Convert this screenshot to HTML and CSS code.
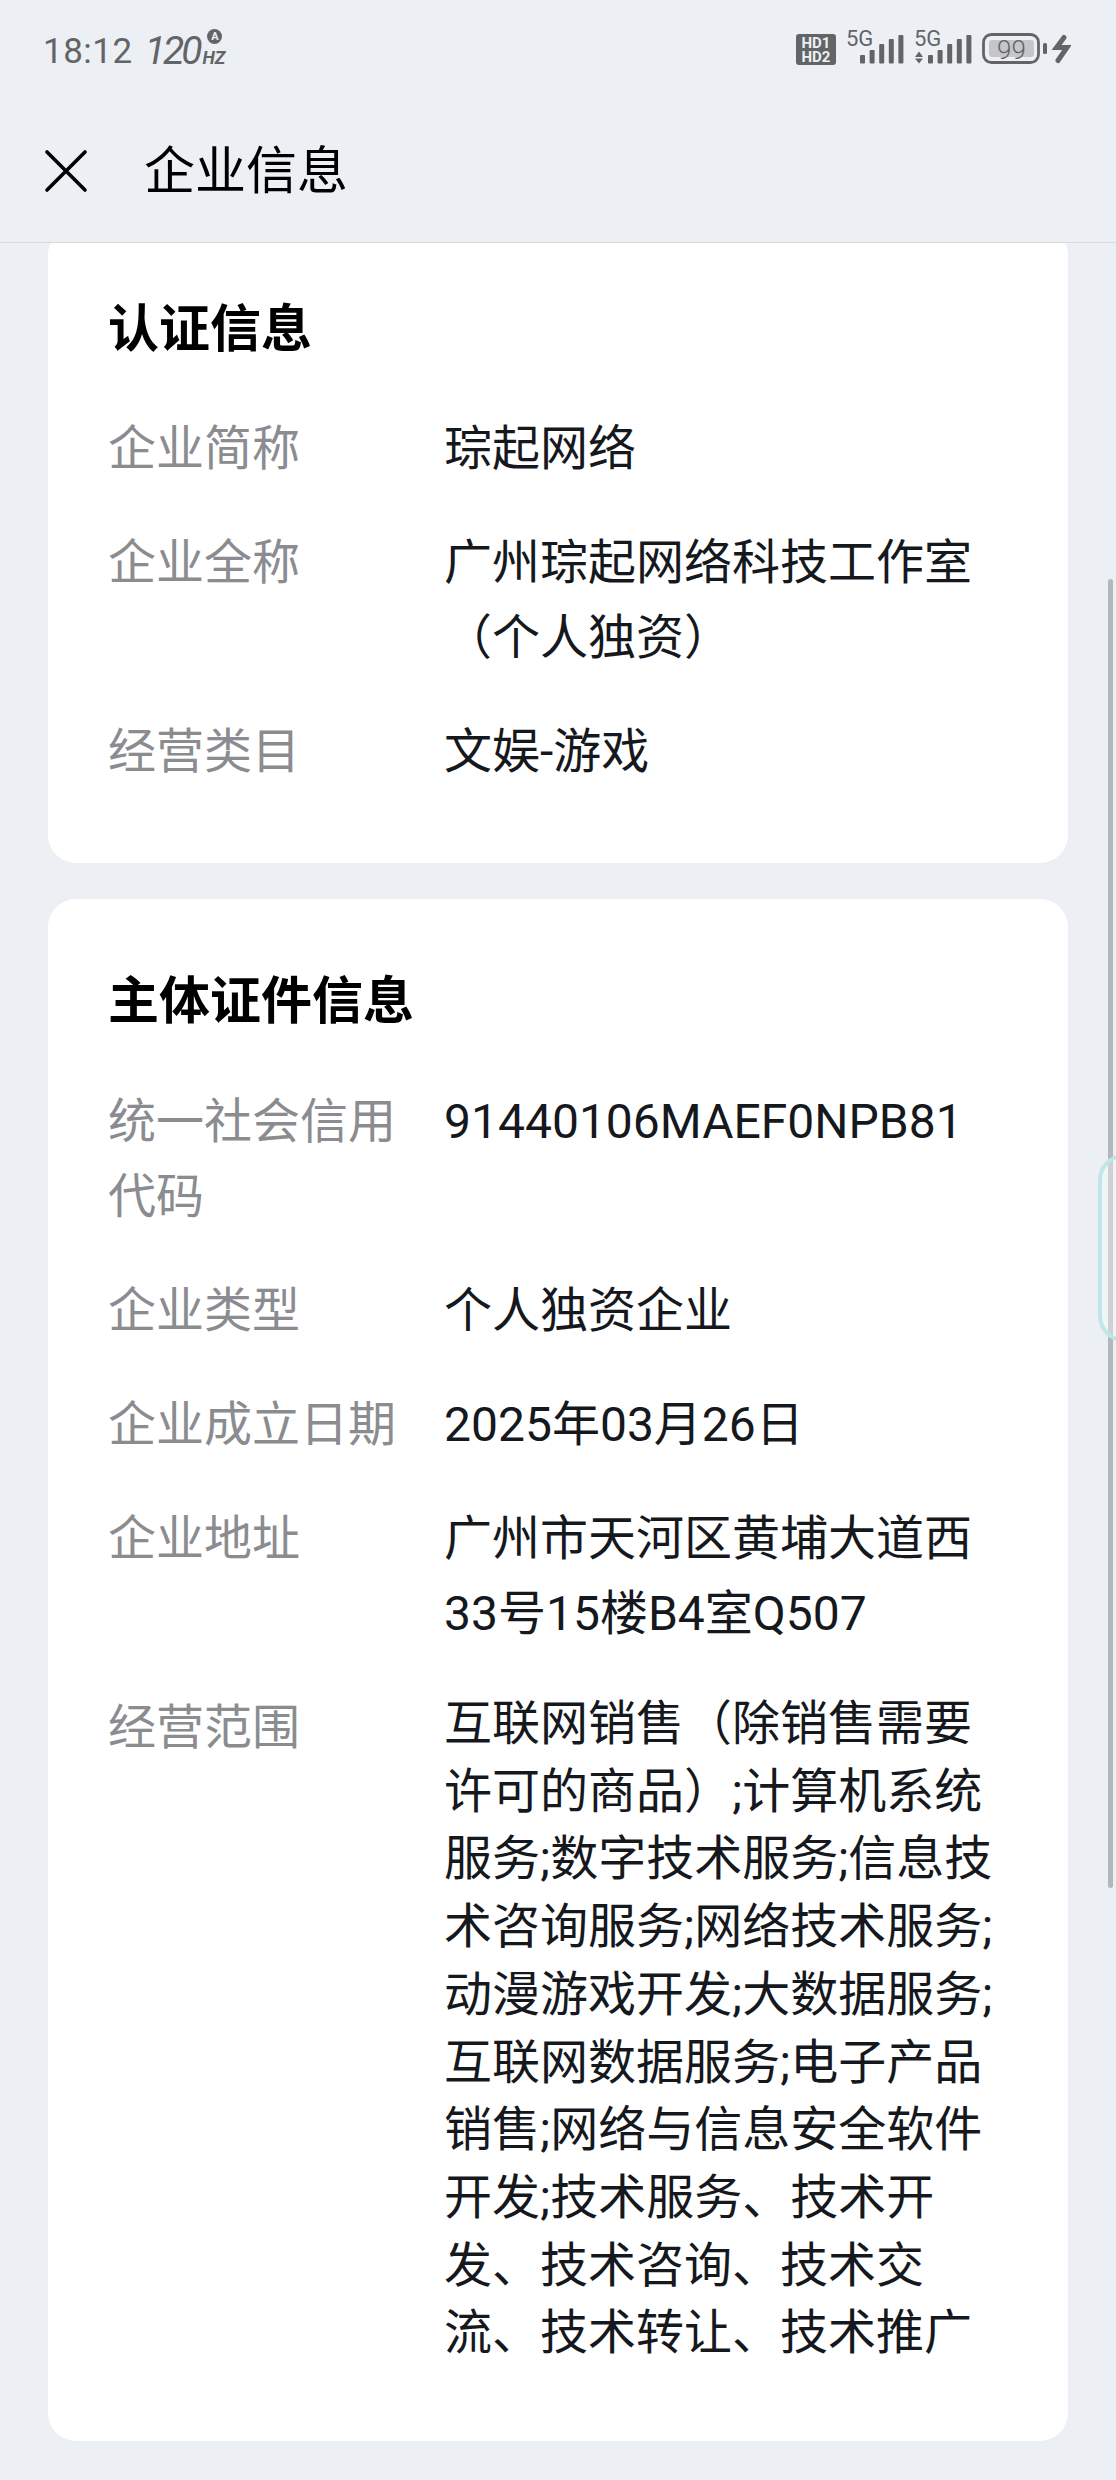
FILE: index.html
```html
<!DOCTYPE html>
<html lang="zh-CN">
<head>
    <meta charset="UTF-8">
    <meta name="viewport" content="width=device-width, initial-scale=1.0">
    <title>企业信息</title>
    <link rel="stylesheet" href="styles.css">
</head>
<body>
    <div class="top">
        <div class="status-bar">
            <div class="status-left">
                <span class="clock">18:12</span>
                <span class="rate">
                    <span class="rate-num">120</span><span class="rate-unit">Hz</span>
                    <span class="rate-auto">A</span>
                </span>
            </div>
            <div class="status-right">
                <svg class="icon-hd" width="40" height="44" viewBox="0 -4 40 44">
                    <rect x="0" y="4" width="40" height="31" rx="3" fill="#636466"/>
                    <text x="20" y="18" class="hd-text">HD1</text>
                    <text x="20" y="32" class="hd-text">HD2</text>
                </svg>
                <svg width="58" height="44" viewBox="0 -4 58 44">
                    <text x="0" y="16" class="net-text">5G</text>
                    <g fill="#636466">
                        <rect x="14" y="25" width="5" height="8.5" rx="1"/>
                        <rect x="23.6" y="20" width="5" height="13.5" rx="1"/>
                        <rect x="33.2" y="14" width="5" height="19.5" rx="1"/>
                        <rect x="42.8" y="9" width="5" height="24.5" rx="1"/>
                        <rect x="52.4" y="5" width="5" height="28.5" rx="1"/>
                    </g>
                </svg>
                <svg width="58" height="44" viewBox="0 -4 58 44">
                    <text x="0" y="16" class="net-text">5G</text>
                    <g fill="#636466">
                        <path d="M5 21.5 L9 27 H1 Z"/>
                        <path d="M5 33.5 L9 28.5 H1 Z"/>
                        <rect x="14" y="25" width="5" height="8.5" rx="1"/>
                        <rect x="23.6" y="20" width="5" height="13.5" rx="1"/>
                        <rect x="33.2" y="14" width="5" height="19.5" rx="1"/>
                        <rect x="42.8" y="9" width="5" height="24.5" rx="1"/>
                        <rect x="52.4" y="5" width="5" height="28.5" rx="1"/>
                    </g>
                </svg>
                <svg width="89" height="44" viewBox="0 -4 89 44">
                    <rect x="1.5" y="4.5" width="55" height="28" rx="8" fill="none" stroke="#636466" stroke-width="2.8"/>
                    <rect x="7" y="10" width="45" height="17" rx="3" fill="#c5c6c9"/>
                    <text x="29.5" y="28.5" class="batt-text">99</text>
                    <rect x="61" y="13" width="4" height="11" rx="1.5" fill="#636466"/>
                    <path d="M82 7.5 L74.5 17.5 H85 L76 30.5" fill="none" stroke="#636466" stroke-width="5" stroke-linecap="round" stroke-linejoin="miter"/>
                </svg>
            </div>
        </div>
        <div class="app-bar">
            <svg class="close-icon" width="46" height="46" viewBox="0 0 46 46">
                <path d="M4 4 L42 42 M42 4 L4 42" fill="none" stroke="#000" stroke-width="3.6" stroke-linecap="round"/>
            </svg>
            <h1>企业信息</h1>
        </div>
    </div>

    <div class="content">
        <section class="card card-first">
            <h2>认证信息</h2>
            <div class="rows">
                <div class="row">
                    <div class="label">企业简称</div>
                    <div class="value">琮起网络</div>
                </div>
                <div class="row">
                    <div class="label">企业全称</div>
                    <div class="value">广州琮起网络科技工作室（个人独资）</div>
                </div>
                <div class="row">
                    <div class="label">经营类目</div>
                    <div class="value">文娱-游戏</div>
                </div>
            </div>
        </section>

        <section class="card">
            <h2>主体证件信息</h2>
            <div class="rows">
                <div class="row">
                    <div class="label">统一社会信用代码</div>
                    <div class="value">91440106MAEF0NPB81</div>
                </div>
                <div class="row">
                    <div class="label">企业类型</div>
                    <div class="value">个人独资企业</div>
                </div>
                <div class="row">
                    <div class="label">企业成立日期</div>
                    <div class="value">2025年03月26日</div>
                </div>
                <div class="row">
                    <div class="label">企业地址</div>
                    <div class="value">广州市天河区黄埔大道西33号15楼B4室Q507</div>
                </div>
                <div class="row">
                    <div class="label">经营范围</div>
                    <div class="value value-long">互联网销售（除销售需要许可的商品）;计算机系统服务;数字技术服务;信息技术咨询服务;网络技术服务;动漫游戏开发;大数据服务;互联网数据服务;电子产品销售;网络与信息安全软件开发;技术服务、技术开发、技术咨询、技术交流、技术转让、技术推广</div>
                </div>
            </div>
        </section>
    </div>

    <div class="scrollbar"></div>
    <div class="side-tab"></div>
</body>
</html>
```

FILE: styles.css
```css
html, body {
    margin: 0;
    height: 2480px;
    overflow: hidden;
}
body {
    position: relative;
    background-color: #ecf0f5;
    font-family: Roboto, "Noto Sans CJK SC", sans-serif;
    color: #15181d;
}
.top {
    position: relative;
    z-index: 2;
    height: 242px;
    background-color: #ecf0f5;
    border-bottom: 1px solid #d8dadd;
}
.status-bar {
    display: flex;
    justify-content: space-between;
    align-items: center;
    height: 100px;
    padding: 0 45px 0 43px;
    box-sizing: border-box;
}
.status-left {
    display: flex;
    align-items: center;
    padding-top: 2px;
}
.clock {
    font-size: 35px;
    color: #636466;
    letter-spacing: 0.5px;
}
.rate {
    position: relative;
    display: flex;
    align-items: baseline;
    margin-left: 12px;
    color: #636466;
    font-style: italic;
}
.rate-num {
    font-size: 39px;
    letter-spacing: -3px;
}
.rate-unit {
    margin-left: 3px;
    font-size: 18px;
    font-weight: 700;
    text-transform: uppercase;
}
.rate-auto {
    position: absolute;
    top: 1px;
    right: 3px;
    width: 15px;
    height: 15px;
    border-radius: 50%;
    background-color: #636466;
    color: #ecf0f5;
    font-size: 11px;
    font-style: normal;
    font-weight: 700;
    line-height: 15px;
    text-align: center;
}
.status-right {
    display: flex;
    gap: 10px;
    margin-top: -4px;
}
.hd-text {
    fill: #ecf0f5;
    font-size: 15px;
    font-weight: 700;
    text-anchor: middle;
}
.net-text {
    fill: #636466;
    font-size: 22px;
}
.batt-text {
    fill: #636466;
    font-size: 26px;
    font-weight: 300;
    text-anchor: middle;
}
.app-bar {
    display: flex;
    align-items: center;
    height: 142px;
    padding: 0 0 0 43px;
}
.close-icon {
    flex: none;
}
h1 {
    margin: 2px 0 0 55px;
    font-size: 51px;
    font-weight: 400;
    color: #000;
    line-height: 70px;
}
.content {
    display: flex;
    flex-direction: column;
    gap: 36px;
    padding: 0 48px;
}
.card {
    background: #fff;
    border-radius: 28px;
    padding: 65px 61px 74px 60px;
}
.card-first {
    margin-top: -16px;
}
h2 {
    margin: 0 0 45px;
    font-size: 51px;
    font-weight: 700;
    color: #000;
    line-height: 75px;
}
.card-first h2 {
    margin-bottom: 44px;
}
.rows {
    display: flex;
    flex-direction: column;
    gap: 39px;
}
.row {
    display: grid;
    grid-template-columns: 336px 1fr;
}
.label {
    width: 300px;
    font-size: 48px;
    line-height: 75px;
    color: #8a8c90;
}
.value {
    font-size: 48px;
    line-height: 75px;
}
.value-long {
    line-height: 67.7px;
}
.scrollbar {
    position: absolute;
    top: 579px;
    right: 3px;
    width: 5px;
    height: 1309px;
    border-radius: 3px;
    background-color: #b4b7ba;
}
.side-tab {
    position: absolute;
    top: 1154px;
    right: -44px;
    width: 54px;
    height: 180px;
    border: 4px solid #c0e6ea;
    border-radius: 26px;
    background-color: rgba(255, 255, 255, 0.35);
}
```
